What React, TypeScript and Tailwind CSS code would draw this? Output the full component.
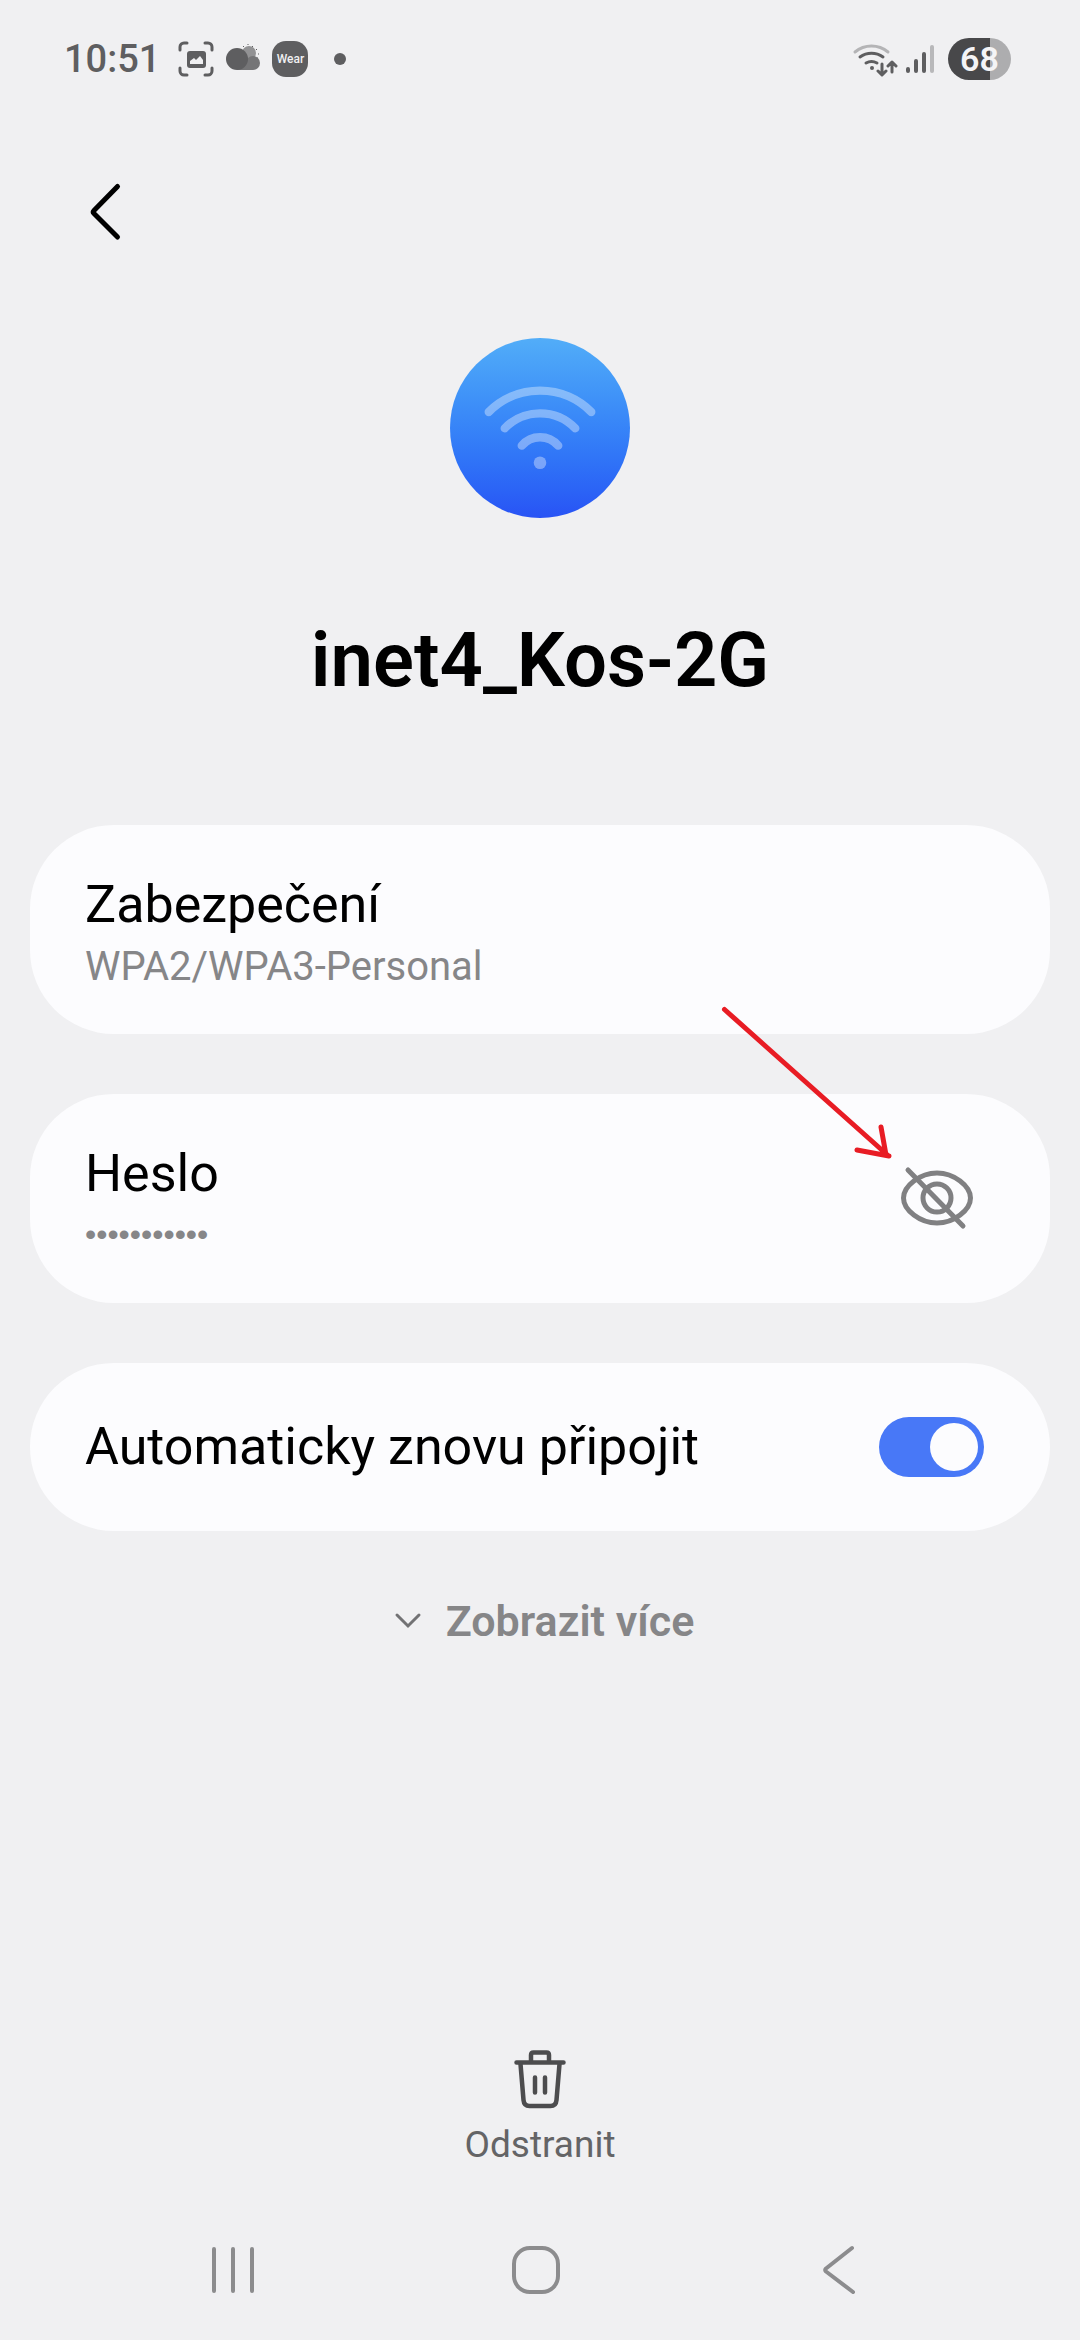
import { useState } from 'react';

function StatusBar() {
  return (
    <header className="flex h-[118px] items-center justify-between pr-[69px] pl-[64px] text-[#5e5e60]">
      <div className="flex items-center">
        <span className="text-[38px] leading-[48px] font-medium">10:51</span>
        <svg className="ml-[18px] h-[36px] w-[36px]" viewBox="0 0 36 36" fill="none">
          <path
            d="M2 9V6a4 4 0 0 1 4-4h3M27 2h3a4 4 0 0 1 4 4v3M34 27v3a4 4 0 0 1-4 4h-3M9 34H6a4 4 0 0 1-4-4v-3"
            stroke="currentColor"
            strokeWidth="3"
            strokeLinecap="round"
          />
          <rect x="9" y="10" width="19" height="17" rx="3" fill="currentColor" />
          <path d="M12 23v-3l4-3 2 2 4-4 3 4v4z" fill="#f0f0f2" />
        </svg>
        <svg className="ml-[11px] h-[36px] w-[36px]" viewBox="0 0 36 36">
          <path
            d="M18 5l1 1M23 3v1M28 5l-1 1M32 8l-1 1M34 13h-1M33 17h-1"
            stroke="#5e5e60"
            strokeWidth="1"
          />
          <circle cx="24" cy="12" r="7" fill="#929294" />
          <circle cx="28" cy="22" r="7" fill="#757577" />
          <path d="M12 20h16v9H12z" fill="#757577" />
          <circle cx="12" cy="18" r="11" fill="#5e5e60" />
        </svg>
        <span className="ml-[11px] flex h-[36px] w-[36px] items-center justify-center rounded-[14px] bg-[#5e5e60] text-[12px] leading-[16px] font-medium text-[#f0f0f2]">
          Wear
        </span>
        <span className="ml-[26px] h-[12px] w-[12px] rounded-full bg-[#5e5e60]" />
      </div>
      <div className="flex items-center">
        <svg className="h-[36px] w-[46px]" viewBox="0 0 46 36" fill="none" strokeLinecap="round" strokeWidth="3">
          <path d="M3 11A26 26 0 0 1 36 11" stroke="#b4b4b6" />
          <path d="M8 16A20 20 0 0 1 31 16" stroke="#5e5e60" />
          <path d="M14 22A11 11 0 0 1 25 22" stroke="#5e5e60" />
          <circle cx="20" cy="27" r="2" fill="#5e5e60" />
          <path d="M30 23v10M26 30l4 4 4-4M40 31V21M36 25l4-4 4 4" stroke="#5e5e60" strokeLinejoin="round" />
        </svg>
        <svg className="ml-[8px] h-[32px] w-[28px]" viewBox="0 0 28 32" strokeWidth="4" strokeLinecap="round">
          <path d="M2 28v-2M10 28V18M18 28V11" stroke="#5e5e60" />
          <path d="M26 28V4" stroke="#b8b8ba" />
        </svg>
        <span className="ml-[14px] flex h-[42px] w-[63px] items-center justify-center rounded-full bg-linear-to-r from-[#48484a] from-67% to-[#adadaf] to-67% text-[34px] leading-[42px] font-semibold text-[#f4f4f6]">
          68
        </span>
      </div>
    </header>
  );
}

function PointerArrow() {
  return (
    <svg
      className="pointer-events-none absolute -top-[94px] right-[150px] h-[165px] w-[184px]"
      viewBox="0 0 184 165"
      fill="none"
      stroke="#e81c24"
      strokeWidth="5"
      strokeLinecap="round"
      strokeLinejoin="round"
    >
      <path d="M8.500 9.500L172 155.500M165 127l5 28M141 150l32 6" />
    </svg>
  );
}

function WifiBadge() {
  return (
    <div className="mx-auto mt-[32px] h-[180px] w-[180px] rounded-full bg-linear-to-b from-[#52adf8] to-[#2953f5]">
      <svg viewBox="0 0 180 180" fill="none" stroke="#fff" strokeWidth="8.300" strokeLinecap="round">
        <g opacity="0.36">
          <path d="M38.700 74A72.400 72.400 0 0 1 141.300 74" />
          <path d="M54.700 90.300A49 49 0 0 1 125.300 90.300" />
          <path d="M71.700 107.700A24 24 0 0 1 108.300 107.700" />
          <circle cx="90" cy="124.700" r="6.300" fill="#fff" stroke="none" />
        </g>
      </svg>
    </div>
  );
}

export default function App() {
  const [visible, setVisible] = useState(false);
  const [reconnect, setReconnect] = useState(true);

  return (
    <div className="flex min-h-screen flex-col bg-[#f0f0f2] font-['Roboto',sans-serif] text-black">
      <StatusBar />

      <div className="flex h-[188px] items-center pl-[76px]">
        <button type="button" aria-label="Zpět" className="flex h-[60px] w-[60px] items-center justify-center">
          <svg className="h-[60px] w-[60px]" viewBox="0 0 60 60" fill="none">
            <path
              d="M41.500 4.500L18 28.500q-1.500 1.500 0 3L41.500 55"
              stroke="#000"
              strokeWidth="5"
              strokeLinecap="round"
              strokeLinejoin="round"
            />
          </svg>
        </button>
      </div>

      <WifiBadge />
      <h1 className="mt-[100px] text-center text-[76px] leading-[84px] font-semibold">inet4_Kos-2G</h1>

      <main className="mt-[123px] flex flex-col gap-[60px] px-[30px]">
        <section className="rounded-[84px] bg-[#fcfcfe] px-[55px] pt-[48px] pb-[37px]">
          <h2 className="text-[52px] leading-[64px]">Zabezpečení</h2>
          <p className="text-[40px] leading-[60px] text-[#868688]">WPA2/WPA3-Personal</p>
        </section>

        <section className="relative flex items-center justify-between rounded-[84px] bg-[#fcfcfe] pt-[48px] pr-[71px] pb-[37px] pl-[55px]">
          <div className="min-w-0 flex-1">
            <label htmlFor="password" className="block text-[52px] leading-[64px]">
              Heslo
            </label>
            <input
              id="password"
              type={visible ? 'text' : 'password'}
              value="heslo-k-wi1"
              readOnly
              className="block h-[56px] w-full bg-transparent font-['Liberation_Sans',sans-serif] text-[32px] leading-[56px] text-[#868688] outline-none mb-[4px]"
            />
          </div>
          <button
            type="button"
            aria-label="Zobrazit heslo"
            className="mb-[12px]"
            onClick={() => setVisible(!visible)}
          >
            <svg
              className="h-[84px] w-[84px]"
              viewBox="0 0 84 84"
              fill="none"
              stroke="#808082"
              strokeWidth="5"
              strokeLinecap="round"
            >
              <path d="M42 17C59 17 75.500 30 75.500 42S59 67 42 67 8.500 54 8.500 42 25 17 42 17z" />
              <circle cx="42" cy="42" r="14" />
              <path d="M13 14L68 70" />
            </svg>
          </button>
          <PointerArrow />
        </section>

        <section className="flex items-center justify-between rounded-[84px] bg-[#fcfcfe] py-[52px] pr-[66px] pl-[55px]">
          <label htmlFor="reconnect" className="text-[52px] leading-[64px]">
            Automaticky znovu připojit
          </label>
          <input
            id="reconnect"
            type="checkbox"
            role="switch"
            checked={reconnect}
            onChange={(e) => setReconnect(e.target.checked)}
            className="flex h-[60px] w-[105px] appearance-none items-center rounded-full bg-[#b0b0b4] p-[6px] before:h-[48px] before:w-[48px] before:rounded-full before:bg-[#fcfcfe] checked:justify-end checked:bg-[#4878f7]"
          />
        </section>
      </main>

      <button
        type="button"
        className="mx-auto mt-[40px] flex h-[100px] items-center gap-[24px] pl-[8px] text-[43px] leading-[52px] font-semibold text-[#868688]"
      >
        <svg className="h-[28px] w-[28px]" viewBox="0 0 28 28" fill="none">
          <path d="M3 8l11 11L25 8" stroke="#727274" strokeWidth="3" strokeLinecap="round" />
        </svg>
        Zobrazit více
      </button>

      <button
        type="button"
        className="mx-auto mt-auto mb-[31px] flex flex-col items-center gap-[12px] text-[37px] leading-[48px] text-[#646466]"
      >
        <svg
          className="h-[60px] w-[60px]"
          viewBox="0 0 60 60"
          fill="none"
          stroke="#4c4c4e"
          strokeWidth="4.500"
          strokeLinecap="round"
          strokeLinejoin="round"
        >
          <path d="M6.500 13.500h47M21 12V6q0-2.500 2.500-2.500h13Q39 3.500 39 6v6" />
          <path d="M10.500 15l3 36q.5 6 6 6h21q5.500 0 6-6l3-36M25 28.500v15M35 28.500v15" />
        </svg>
        Odstranit
      </button>

      <nav className="flex h-[140px] items-center pr-[90px] pl-[82px] text-[#8c8c8e]">
        <button type="button" aria-label="Poslední aplikace" className="flex flex-1 justify-center">
          <svg className="h-[52px] w-[52px]" viewBox="0 0 52 52" stroke="currentColor" strokeWidth="4" strokeLinecap="round">
            <path d="M7 5v42M26 5v42M45 5v42" />
          </svg>
        </button>
        <button type="button" aria-label="Domů" className="flex flex-1 justify-center">
          <svg className="h-[52px] w-[52px]" viewBox="0 0 52 52" fill="none" stroke="currentColor" strokeWidth="4">
            <rect x="4" y="4" width="44" height="44" rx="16" />
          </svg>
        </button>
        <button type="button" aria-label="Zpět" className="flex flex-1 justify-center">
          <svg
            className="h-[52px] w-[52px]"
            viewBox="0 0 52 52"
            fill="none"
            stroke="currentColor"
            strokeWidth="4"
            strokeLinecap="round"
            strokeLinejoin="round"
          >
            <path d="M39 4L13 24.500q-1.500 1.500 0 3L40 48" />
          </svg>
        </button>
      </nav>
    </div>
  );
}
